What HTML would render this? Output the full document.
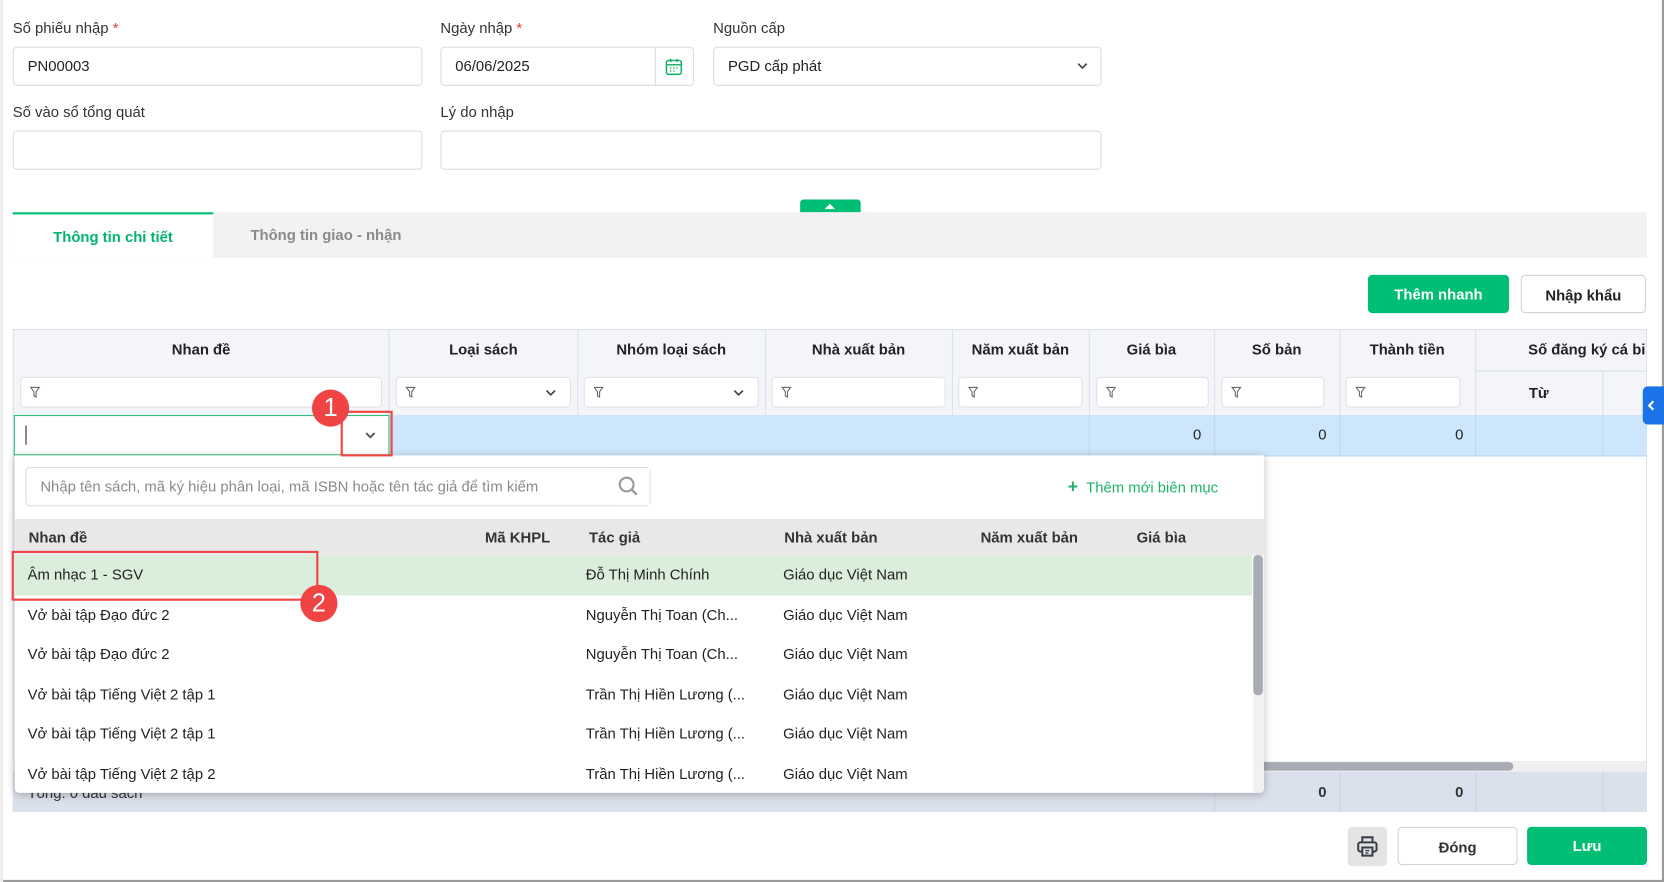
<!DOCTYPE html>
<html><head><meta charset="utf-8"><style>
*{box-sizing:border-box;margin:0;padding:0}
html,body{width:1664px;height:882px;overflow:hidden;background:#fff}
#w{position:absolute;left:0;top:0;width:1568px;height:831px;transform:scale(1.06122,1.0614);transform-origin:0 0;font-family:"Liberation Sans",sans-serif;font-size:14px;color:#222;border-right:2px solid #9a9a9a;border-bottom:2px solid #9a9a9a}
.a{position:absolute}
.lbl{position:absolute;font-size:14px;color:#333}
.req{color:#e53935}
.inp{position:absolute;border:1px solid #d9dce2;border-radius:4px;background:#fff;height:37px;padding-left:13px;line-height:35px;font-size:14px;color:#222}
.th{position:absolute;top:310px;height:39px;line-height:39px;text-align:center;font-weight:bold;font-size:14px;color:#222}
.fl{position:absolute;top:355px;height:29px;background:#fff;border:1px solid #e0e2e8;border-radius:4px}
.fl svg{position:absolute;left:8px;top:8px}
.vl{position:absolute;width:1px;background:#dde0ea}
.dc{position:absolute;font-size:14px;color:#222}
.row{position:absolute;left:14px;width:1167px;height:37.5px;line-height:37.5px}
.row span{position:absolute;white-space:nowrap}
.btn{position:absolute;height:36px;line-height:36px;text-align:center;border-radius:4px;font-weight:bold;font-size:14px}
</style></head><body><div id="w">
<div class="a" style="left:0;top:0;width:3px;height:831px;background:#eee"></div>

<div class="lbl" style="left:12px;top:18px">Số phiếu nhập <span class="req">*</span></div>
<div class="lbl" style="left:415px;top:18px">Ngày nhập <span class="req">*</span></div>
<div class="lbl" style="left:672px;top:18px">Nguồn cấp</div>
<div class="inp" style="left:12px;top:44px;width:386px">PN00003</div>
<div class="inp" style="left:415px;top:44px;width:239px">06/06/2025</div>
<div class="a" style="left:617px;top:45px;width:1px;height:35px;background:#d9dce2"></div>
<svg class="a" style="left:626px;top:54px" width="18" height="18" viewBox="0 0 18 18" fill="none" stroke="#1db36a" stroke-width="1.5"><rect x="2" y="3" width="14" height="13" rx="2"/><path d="M2 7h14M6 1.5v3M12 1.5v3"/><path d="M5.5 10h1M8.5 10h1M11.5 10h1M5.5 13h1M8.5 13h1" stroke-width="1.6"/></svg>
<div class="inp" style="left:672px;top:44px;width:366px">PGD cấp phát</div>
<svg class="a" style="left:1014px;top:57px" width="12" height="10" viewBox="0 0 12 10"><path d="M2 3l4 4 4-4" fill="none" stroke="#444" stroke-width="1.6"/></svg>

<div class="lbl" style="left:12px;top:97px">Số vào sổ tổng quát</div>
<div class="lbl" style="left:415px;top:97px">Lý do nhập</div>
<div class="inp" style="left:12px;top:123px;width:386px"></div>
<div class="inp" style="left:415px;top:123px;width:623px"></div>

<div class="a" style="left:754px;top:188px;width:57px;height:12px;background:#00be73;border-radius:3px 3px 0 0"></div>
<svg class="a" style="left:776px;top:190px" width="12" height="8"><path d="M1 7l5-5 5 5z" fill="#fff"/></svg>

<div class="a" style="left:12px;top:200px;width:1540px;height:43px;background:#f2f2f2"></div>
<div class="a" style="left:12px;top:200px;width:189px;height:43px;background:#fff;border-top:2px solid #00be73;text-align:center;line-height:42px;font-weight:bold;color:#00b56d">Thông tin chi tiết</div>
<div class="a" style="left:236px;top:200px;height:43px;line-height:43px;font-weight:bold;color:#8a8a8a">Thông tin giao - nhận</div>

<div class="btn" style="left:1289px;top:259px;width:133px;background:#00be73;color:#fff">Thêm nhanh</div>
<div class="btn" style="left:1433px;top:259px;width:118px;background:#fff;border:1px solid #cfd2d8;color:#222">Nhập khẩu</div>

<div class="a" style="left:12px;top:310px;width:1540px;height:81px;background:#f3f5f9;border-top:1px solid #dde0ea;border-left:1px solid #dde0ea"></div>
<div class="a" style="left:12px;top:391px;width:1px;height:374px;background:#dde0ea"></div>
<div class="a" style="left:1551px;top:310px;width:1px;height:455px;background:#dde0ea"></div>
<div class="th" style="left:12px;width:355px">Nhan đề</div>
<div class="th" style="left:367px;width:177px">Loại sách</div>
<div class="th" style="left:544px;width:177px">Nhóm loại sách</div>
<div class="th" style="left:721px;width:176px">Nhà xuất bản</div>
<div class="th" style="left:897px;width:129px">Năm xuất bản</div>
<div class="th" style="left:1026px;width:118px">Giá bìa</div>
<div class="th" style="left:1144px;width:118px">Số bản</div>
<div class="th" style="left:1262px;width:128px">Thành tiền</div>
<div class="a" style="left:1390px;top:310px;width:161px;height:39px;line-height:39px;padding-left:50px;font-weight:bold;white-space:nowrap;overflow:hidden">Số đăng ký cá biệt</div>
<div class="a" style="left:1390px;top:349px;width:161px;height:1px;background:#dde0ea"></div>
<div class="a" style="left:1390px;top:350px;width:120px;height:41px;line-height:41px;text-align:center;font-weight:bold">Từ</div>
<div class="vl" style="left:1510px;top:350px;height:80px"></div>
<div class="vl" style="left:366px;top:310px;height:120px"></div>
<div class="vl" style="left:544px;top:310px;height:120px"></div>
<div class="vl" style="left:721px;top:310px;height:120px"></div>
<div class="vl" style="left:897px;top:310px;height:120px"></div>
<div class="vl" style="left:1026px;top:310px;height:120px"></div>
<div class="vl" style="left:1144px;top:310px;height:120px"></div>
<div class="vl" style="left:1262px;top:310px;height:120px"></div>
<div class="vl" style="left:1390px;top:310px;height:120px"></div>

<div class="fl" style="left:19px;width:341px"><svg width="10" height="11" viewBox="0 0 10 11"><path d="M1 1h8L6 5v5L4 9V5z" fill="none" stroke="#666" stroke-width="1"/></svg></div>
<div class="fl" style="left:373px;width:165px"><svg width="10" height="11" viewBox="0 0 10 11"><path d="M1 1h8L6 5v5L4 9V5z" fill="none" stroke="#666" stroke-width="1"/></svg><svg style="left:139px;top:9px" width="12" height="10" viewBox="0 0 12 10"><path d="M2 3l4 4 4-4" fill="none" stroke="#444" stroke-width="1.6"/></svg></div>
<div class="fl" style="left:550px;width:165px"><svg width="10" height="11" viewBox="0 0 10 11"><path d="M1 1h8L6 5v5L4 9V5z" fill="none" stroke="#666" stroke-width="1"/></svg><svg style="left:139px;top:9px" width="12" height="10" viewBox="0 0 12 10"><path d="M2 3l4 4 4-4" fill="none" stroke="#444" stroke-width="1.6"/></svg></div>
<div class="fl" style="left:727px;width:164px"><svg width="10" height="11" viewBox="0 0 10 11"><path d="M1 1h8L6 5v5L4 9V5z" fill="none" stroke="#666" stroke-width="1"/></svg></div>
<div class="fl" style="left:903px;width:117px"><svg width="10" height="11" viewBox="0 0 10 11"><path d="M1 1h8L6 5v5L4 9V5z" fill="none" stroke="#666" stroke-width="1"/></svg></div>
<div class="fl" style="left:1033px;width:106px"><svg width="10" height="11" viewBox="0 0 10 11"><path d="M1 1h8L6 5v5L4 9V5z" fill="none" stroke="#666" stroke-width="1"/></svg></div>
<div class="fl" style="left:1151px;width:97px"><svg width="10" height="11" viewBox="0 0 10 11"><path d="M1 1h8L6 5v5L4 9V5z" fill="none" stroke="#666" stroke-width="1"/></svg></div>
<div class="fl" style="left:1268px;width:108px"><svg width="10" height="11" viewBox="0 0 10 11"><path d="M1 1h8L6 5v5L4 9V5z" fill="none" stroke="#666" stroke-width="1"/></svg></div>

<div class="a" style="left:12px;top:391px;width:1540px;height:39px;background:#cde6fb;border-bottom:1px solid #b9d6ef"></div>
<div class="vl" style="left:1026px;top:391px;height:39px;background:#c0d6ea"></div>
<div class="vl" style="left:1144px;top:391px;height:39px;background:#c0d6ea"></div>
<div class="vl" style="left:1262px;top:391px;height:39px;background:#c0d6ea"></div>
<div class="vl" style="left:1390px;top:391px;height:39px;background:#c0d6ea"></div>
<div class="vl" style="left:1510px;top:391px;height:39px;background:#c0d6ea"></div>
<div class="a" style="left:13px;top:391px;width:354px;height:38px;background:#fff;border:1px solid #2fbd79"></div>
<div class="a" style="left:24px;top:401px;width:1px;height:18px;background:#222"></div>
<svg class="a" style="left:343px;top:405px" width="12" height="10" viewBox="0 0 12 10"><path d="M2 3l4 4 4-4" fill="none" stroke="#555" stroke-width="1.7"/></svg>
<div class="dc" style="left:1026px;top:401px;width:106px;text-align:right">0</div>
<div class="dc" style="left:1144px;top:401px;width:106px;text-align:right">0</div>
<div class="dc" style="left:1262px;top:401px;width:117px;text-align:right">0</div>

<div class="a" style="left:12px;top:717px;width:1539px;height:10px;background:#efefef"></div>
<div class="a" style="left:1100px;top:718px;width:326px;height:8px;background:#a8abb3;border-radius:4px"></div>
<div class="a" style="left:12px;top:727px;width:1539px;height:38px;background:#dbe1ec"></div>
<div class="vl" style="left:1144px;top:727px;height:38px;background:#cdd3df"></div>
<div class="vl" style="left:1262px;top:727px;height:38px;background:#cdd3df"></div>
<div class="vl" style="left:1390px;top:727px;height:38px;background:#cdd3df"></div>
<div class="vl" style="left:1510px;top:727px;height:38px;background:#cdd3df"></div>
<div class="a" style="left:26px;top:739px;font-size:14px;color:#333">Tổng: 0 đầu sách</div>
<div class="dc" style="left:1144px;top:738px;width:106px;text-align:right;font-weight:bold;color:#333">0</div>
<div class="dc" style="left:1262px;top:738px;width:117px;text-align:right;font-weight:bold;color:#333">0</div>

<div class="a" style="left:1548px;top:364px;width:20px;height:36px;background:#1a73e8;border-radius:5px 0 0 5px"></div>
<svg class="a" style="left:1552px;top:376px" width="8" height="12"><path d="M6 2L2 6l4 4" fill="none" stroke="#fff" stroke-width="2"/></svg>

<div class="a" style="left:14px;top:429px;width:1177px;height:318px;background:#fff;box-shadow:0 2px 8px rgba(0,0,0,.25);border-radius:0 0 4px 4px;overflow:hidden">
 <div class="a" style="left:10px;top:11px;width:589px;height:37px;border:1px solid #d9dce2;border-radius:4px;line-height:35px;padding-left:13px;color:#8a8a8a;white-space:nowrap;overflow:hidden">Nhập tên sách, mã ký hiệu phân loại, mã ISBN hoặc tên tác giả để tìm kiếm</div>
 <div class="a" style="left:560px;top:12px;width:38px;height:35px;background:#fff"></div>
 <svg class="a" style="left:568px;top:19px" width="20" height="20" viewBox="0 0 20 20"><circle cx="8.5" cy="8.5" r="6.5" fill="none" stroke="#999" stroke-width="2"/><path d="M13.5 13.5L18 18" stroke="#999" stroke-width="2.2"/></svg>
 <div class="a" style="left:992px;top:20px;color:#1db36a;font-size:14px"><b style="font-size:17px">+</b>&nbsp; Thêm mới biên mục</div>
 <div class="a" style="left:0;top:60px;width:1177px;height:34px;background:#e8e8e8;font-weight:bold;color:#333;line-height:34px">
  <span class="a" style="left:13px">Nhan đề</span><span class="a" style="left:443px">Mã KHPL</span><span class="a" style="left:541px">Tác giả</span><span class="a" style="left:725px">Nhà xuất bản</span><span class="a" style="left:910px">Năm xuất bản</span><span class="a" style="left:1057px">Giá bìa</span>
 </div>
 <div class="a" style="left:1167px;top:94px;width:10px;height:230px;background:#f1f1f1"></div>
 <div class="a" style="left:1167px;top:94px;width:9px;height:132px;background:#a8abb3;border-radius:4px"></div>
</div>
<div class="row" style="top:523px;background:#dbeedb;width:1166px"><span style="left:12px">Âm nhạc 1 - SGV</span><span style="left:538px">Đỗ Thị Minh Chính</span><span style="left:724px">Giáo dục Việt Nam</span></div>
<div class="row" style="top:560.5px"><span style="left:12px">Vở bài tập Đạo đức 2</span><span style="left:538px">Nguyễn Thị Toan (Ch...</span><span style="left:724px">Giáo dục Việt Nam</span></div>
<div class="row" style="top:598px"><span style="left:12px">Vở bài tập Đạo đức 2</span><span style="left:538px">Nguyễn Thị Toan (Ch...</span><span style="left:724px">Giáo dục Việt Nam</span></div>
<div class="row" style="top:635.5px"><span style="left:12px">Vở bài tập Tiếng Việt 2 tập 1</span><span style="left:538px">Trần Thị Hiền Lương (...</span><span style="left:724px">Giáo dục Việt Nam</span></div>
<div class="row" style="top:673px"><span style="left:12px">Vở bài tập Tiếng Việt 2 tập 1</span><span style="left:538px">Trần Thị Hiền Lương (...</span><span style="left:724px">Giáo dục Việt Nam</span></div>
<div class="row" style="top:710.5px;height:36px"><span style="left:12px">Vở bài tập Tiếng Việt 2 tập 2</span><span style="left:538px">Trần Thị Hiền Lương (...</span><span style="left:724px">Giáo dục Việt Nam</span></div>

<div class="a" style="left:321px;top:387px;width:49px;height:43px;border:2px solid #f04444"></div>
<div class="a" style="left:294px;top:367px;width:35px;height:35px;border-radius:50%;background:#f04444;color:#fff;font-size:24px;text-align:center;line-height:35px">1</div>
<div class="a" style="left:11px;top:519px;width:289px;height:47px;border:2px solid #f04444"></div>
<div class="a" style="left:283px;top:551px;width:35px;height:35px;border-radius:50%;background:#f04444;color:#fff;font-size:24px;text-align:center;line-height:35px">2</div>

<div class="a" style="left:1270px;top:779px;width:37px;height:37px;background:#e4e4e4;border-radius:4px"></div>
<svg class="a" style="left:1277px;top:786px" width="23" height="23" viewBox="0 0 24 24" fill="none" stroke="#3a3f4a" stroke-width="2"><path d="M7 8V3h10v5"/><rect x="3" y="8" width="18" height="9" rx="2"/><rect x="7" y="13" width="10" height="8" fill="#e4e4e4"/><path d="M10 16h4M10 18.5h3" stroke-width="1.4"/></svg>
<div class="btn" style="left:1317px;top:779px;width:113px;background:#fff;border:1px solid #cfd2d8;color:#333">Đóng</div>
<div class="btn" style="left:1439px;top:779px;width:113px;background:#00be73;color:#fff">Lưu</div>
</div></body></html>
